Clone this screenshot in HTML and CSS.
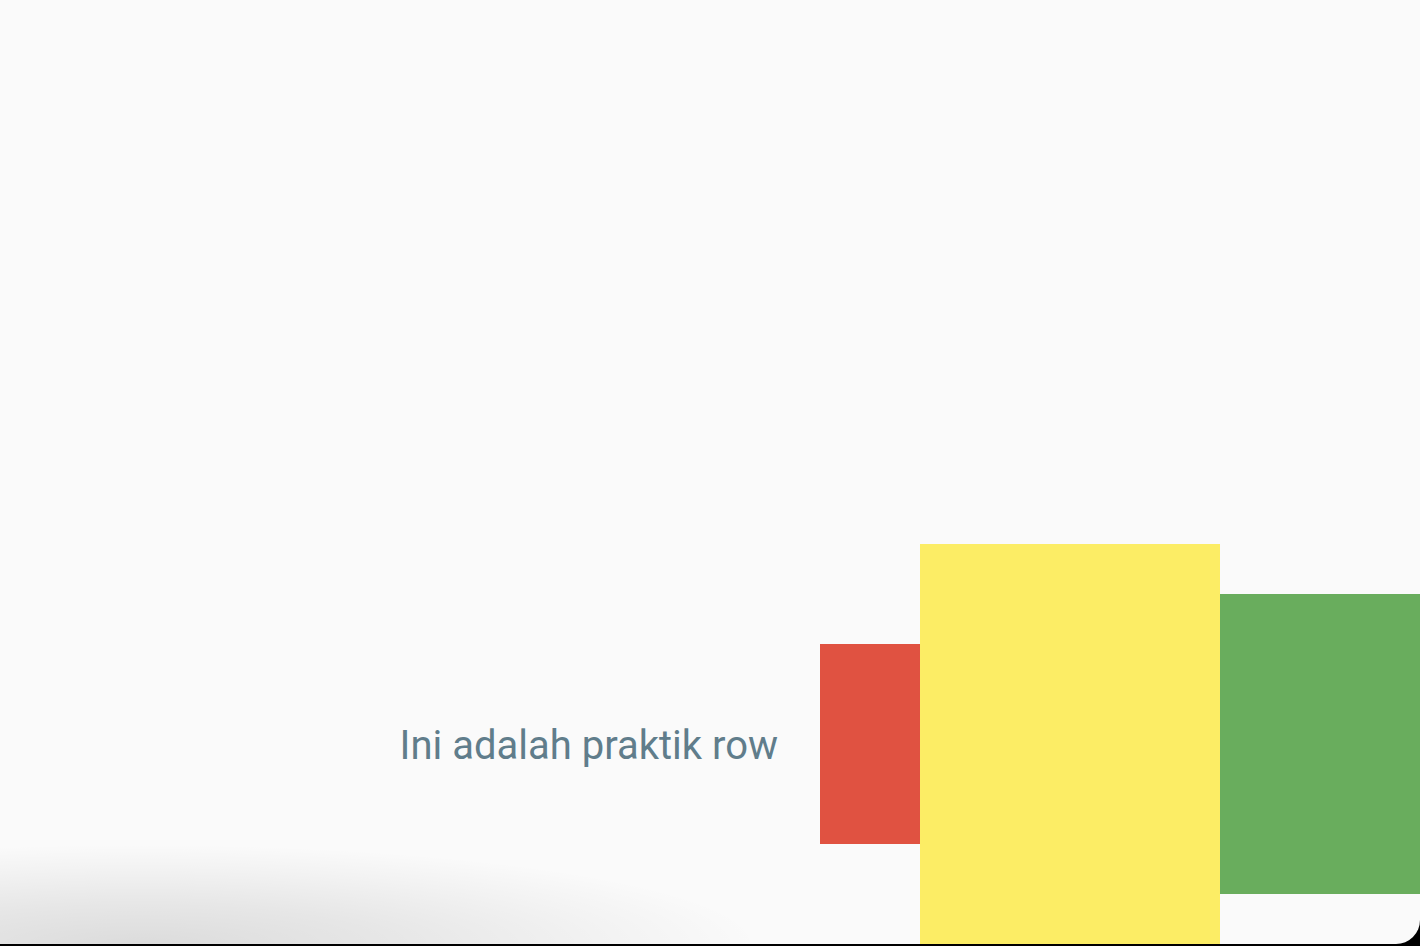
FILE: index.html
```html
<!DOCTYPE html>
<html>
<head>
<meta charset="utf-8">
<link rel="stylesheet" href="styles.css">
</head>
<body>
<div class="screen">
  <div class="row">
    <span class="label">Ini adalah praktik row</span>
    <div class="box red"></div>
    <div class="box yellow"></div>
    <div class="box green"></div>
  </div>
  <div class="shade"></div>
</div>
</body>
</html>
```
FILE: styles.css
```css
html, body {
  margin: 0;
  padding: 0;
  background: #000;
  width: 1420px;
  height: 946px;
  overflow: hidden;
}
.screen {
  position: relative;
  width: 1420px;
  height: 944px;
  background: #fafafa;
  border-bottom-right-radius: 24px;
  overflow: hidden;
  display: flex;
  flex-direction: column;
  justify-content: flex-end;
}
.row {
  display: flex;
  align-items: center;
  justify-content: flex-end;
  height: 400px;
}
.label {
  font-family: Roboto, "Liberation Sans", sans-serif;
  font-size: 40px;
  color: #607d8b;
  margin-right: 42px;
  margin-top: 4px;
  line-height: 1;
}
.box { flex: none; }
.red { width: 100px; height: 200px; background: #e05241; }
.yellow { width: 300px; height: 400px; background: #fced65; }
.green { width: 200px; height: 300px; background: #69ad5d; }
.shade {
  position: absolute;
  left: 0;
  bottom: 0;
  width: 800px;
  height: 100px;
  background: radial-gradient(620px 100px at 140px 100%, rgba(0,0,0,0.12) 0%, rgba(0,0,0,0.08) 40%, rgba(0,0,0,0.03) 75%, rgba(0,0,0,0) 100%);
  pointer-events: none;
}
```
